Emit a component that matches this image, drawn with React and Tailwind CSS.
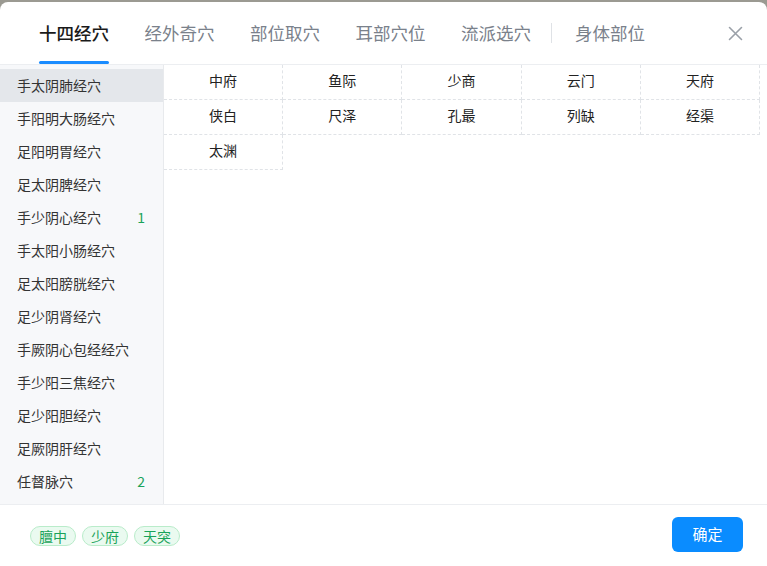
import React, { useState } from 'react';

const tabs = ['十四经穴', '经外奇穴', '部位取穴', '耳部穴位', '流派选穴'];

const meridians = [
  { name: '手太阴肺经穴' },
  { name: '手阳明大肠经穴' },
  { name: '足阳明胃经穴' },
  { name: '足太阴脾经穴' },
  { name: '手少阴心经穴', count: 1 },
  { name: '手太阳小肠经穴' },
  { name: '足太阳膀胱经穴' },
  { name: '足少阴肾经穴' },
  { name: '手厥阴心包经经穴' },
  { name: '手少阳三焦经穴' },
  { name: '足少阳胆经穴' },
  { name: '足厥阴肝经穴' },
  { name: '任督脉穴', count: 2 },
];

const points = ['中府', '鱼际', '少商', '云门', '天府', '侠白', '尺泽', '孔最', '列缺', '经渠', '太渊'];

const picked = ['膻中', '少府', '天突'];

export default function App() {
  const [tab, setTab]   = useState(0);
  const [active, setActive] = useState(0);

  return (
    <div
      className="h-[566px] bg-[#9b9a92] pt-[2px] overflow-hidden"
      style={{ fontFamily: '"Noto Sans CJK SC", "Noto Sans", sans-serif' }}
    >
      <div className="h-[564px] bg-white rounded-t-lg flex flex-col overflow-hidden">
        {/* Tabs header */}
        <div className="h-[63px] shrink-0 border-b border-[#eceef1] flex items-stretch pl-[39px] pr-[24px]">
          <div className="flex items-stretch gap-[35.5px]">
            {tabs.map((t, i) => (
              <button
                key={t}
                onClick={() => setTab(i)}
                className={`relative flex items-center text-[17.5px] leading-none ${
                  tab === i ? 'text-[#1a1a1a] font-medium' : 'text-[#7a818b]'
                }`}
              >
                {t}
                {tab === i && (
                  <span className="absolute left-0 right-0 bottom-0 h-[3px] rounded-full bg-[#1a8cff]" />
                )}
              </button>
            ))}
          </div>
          <div className="flex items-center ml-[20px]">
            <span className="w-px h-[20px] bg-[#dfe2e6]" />
          </div>
          <button className="flex items-center ml-[23px] text-[17.5px] leading-none text-[#7a818b]">
            身体部位
          </button>
          <button className="ml-auto flex items-center text-[#9aa0a8]">
            <svg width="15" height="15" viewBox="0 0 15 15" fill="none" stroke="currentColor" strokeWidth="1.6" strokeLinecap="round">
              <path d="M1.5 1.5l12 12M13.5 1.5l-12 12" />
            </svg>
          </button>
        </div>

        {/* Body */}
        <div className="flex flex-1 min-h-0">
          <div className="w-[164px] shrink-0 bg-[#f7f8fa] border-r border-[#e8eaed] pt-[4px]">
            {meridians.map((m, i) => (
              <div
                key={m.name}
                onClick={() => setActive(i)}
                className={`h-[33px] flex items-center justify-between pl-[17px] pr-[18px] text-[14px] text-[#333] cursor-pointer ${
                  active === i ? 'bg-[#e4e7eb]' : ''
                }`}
              >
                <span>{m.name}</span>
                {m.count && <span className="text-[#1aa35a] text-[14px]">{m.count}</span>}
              </div>
            ))}
          </div>

          <div className="flex-1 pr-[7px]">
            <div className="grid grid-cols-5">
              {points.map((p) => (
                <div
                  key={p}
                  className="h-[35px] pb-[3px] flex items-center justify-center text-[14px] text-[#222] border-r border-b border-dashed border-[#e0e3e7]"
                >
                  {p}
                </div>
              ))}
            </div>
          </div>
        </div>

        {/* Footer */}
        <div className="h-[62px] shrink-0 border-t border-[#eceef1] flex items-center justify-between pl-[30px] pr-[24px]">
          <div className="flex gap-[6px]">
            {picked.map((p) => (
              <span
                key={p}
                className="h-[20px] px-[8px] flex items-center rounded-full border border-[#b9ecca] bg-[#eafaf0] text-[#1aa35a] text-[14px] leading-none"
              >
                {p}
              </span>
            ))}
          </div>
          <button className="w-[71px] h-[35px] rounded-md bg-[#0a8cff] text-white text-[15px] mb-[2px]">
            确定
          </button>
        </div>
      </div>
    </div>
  );
}
